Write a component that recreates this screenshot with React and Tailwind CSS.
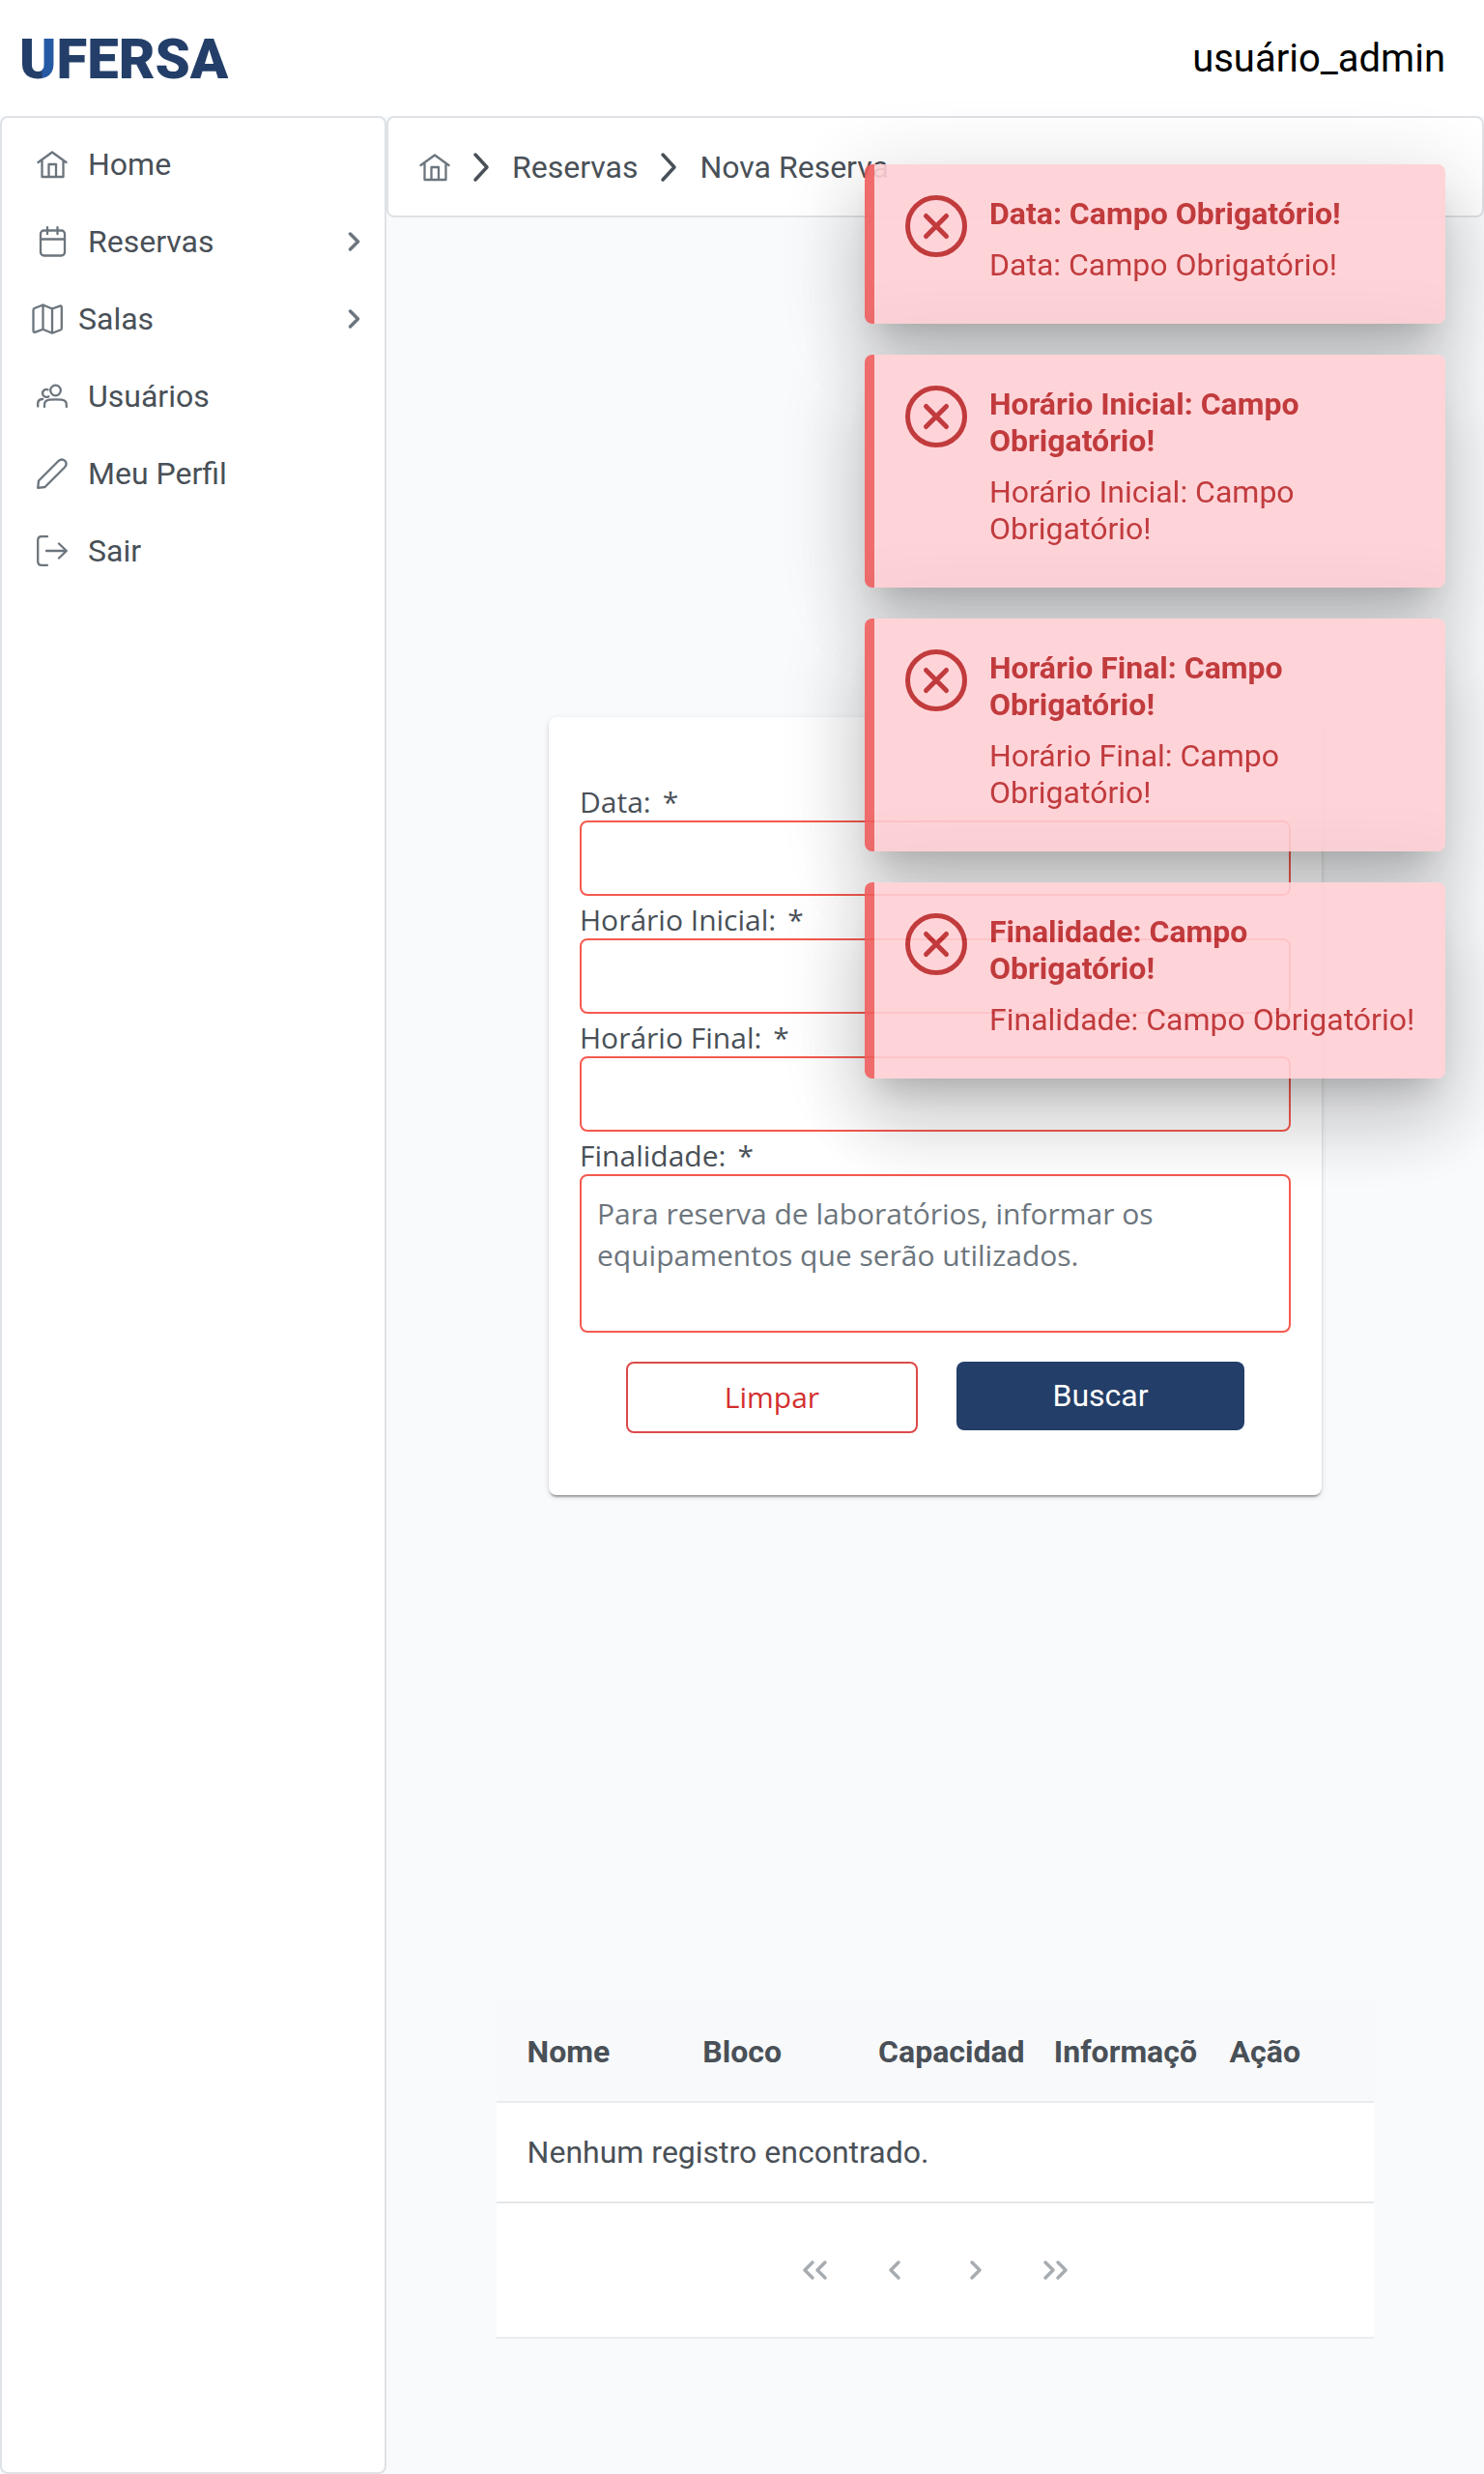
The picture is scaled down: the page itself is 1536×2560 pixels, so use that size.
const HomeIcon = () => (
  <svg viewBox="0 0 32 32" className="size-8" fill="none" stroke="currentColor" strokeWidth="2.3" strokeLinecap="round" strokeLinejoin="round" aria-hidden="true">
    <path d="M1.500 14 16 3.500 30.500 14M5.500 12v17h22V12M12.500 29V16h7.500v13" />
  </svg>
);

const CalendarIcon = () => (
  <svg viewBox="0 0 32 32" className="size-8" fill="none" stroke="currentColor" strokeWidth="2.3" strokeLinecap="round" aria-hidden="true">
    <rect x="4" y="4.500" width="25" height="26" rx="3.500" />
    <path d="M11 1.200v7M21.500 1.200v7M4 13.500h25" />
  </svg>
);

const MapIcon = () => (
  <svg viewBox="0 0 32 32" className="size-8" fill="none" stroke="currentColor" strokeWidth="2.3" strokeLinecap="round" strokeLinejoin="round" aria-hidden="true">
    <path d="M11.500 1.500 2.700 5Q1.500 5.500 1.500 6.800V28Q1.500 30.500 3.700 29.700L11.500 26.700 21 30.700 30 27.200Q30.800 26.800 30.800 25.500V4Q30.800 1.800 29 2.600L21 5.500ZM11.500 1.500V26.700M21 5.500V30.700" />
  </svg>
);

const UsersIcon = () => (
  <svg viewBox="0 0 32 32" className="size-8" fill="none" stroke="currentColor" strokeWidth="2.3" strokeLinecap="round" aria-hidden="true">
    <circle cx="19.500" cy="10" r="5.300" />
    <path d="M8 27v-2q0-4.500 5-5.300 6.500-.8 13 0 4.800.8 4.800 5.300v2M11.500 9.200a4 4 0 1 0 .8 7M1.200 26.500V23q.5-4 5-4" />
  </svg>
);

const PencilIcon = () => (
  <svg viewBox="0 0 32 32" className="size-8" fill="none" stroke="currentColor" strokeWidth="2.3" strokeLinecap="round" strokeLinejoin="round" aria-hidden="true">
    <path d="M1.200 30.800 2 23.500 22.500 3Q26 .2 29.200 2.800 32 6 29 9.500L8.500 30Z" />
  </svg>
);

const SignOutIcon = () => (
  <svg viewBox="0 0 32 32" className="size-8" fill="none" stroke="currentColor" strokeWidth="2.3" strokeLinecap="round" strokeLinejoin="round" aria-hidden="true">
    <path d="M11 1.200H5Q1.200 1.200 1.200 5v22q0 3.800 3.800 3.800h6M10 16h20.500M23 8.500 30.800 16 23 23.500" />
  </svg>
);

const ChevronRight = () => (
  <svg viewBox="0 0 14 22" className="h-[22px] w-3.5" fill="none" stroke="currentColor" strokeWidth="3.500" strokeLinecap="round" strokeLinejoin="round" aria-hidden="true">
    <path d="M2.500 3l8 8-8 8" />
  </svg>
);

const Separator = () => (
  <svg viewBox="0 0 18 32" className="h-8 w-[18px]" fill="none" stroke="currentColor" strokeWidth="3.500" strokeLinecap="round" strokeLinejoin="round" aria-hidden="true">
    <path d="M3 3l12 13L3 29" />
  </svg>
);

const ErrorIcon = () => (
  <svg viewBox="0 0 64 64" className="size-16 shrink-0" fill="none" stroke="currentColor" strokeWidth="5" strokeLinecap="round" aria-hidden="true">
    <circle cx="32" cy="32" r="29.500" />
    <path d="M21.500 21.500l21 21M42.500 21.500l-21 21" />
  </svg>
);

const menu = [
  { label: "Home", Icon: HomeIcon, wide: true },
  { label: "Reservas", Icon: CalendarIcon, wide: true, sub: true },
  { label: "Salas", Icon: MapIcon, sub: true },
  { label: "Usuários", Icon: UsersIcon, wide: true },
  { label: "Meu Perfil", Icon: PencilIcon, wide: true },
  { label: "Sair", Icon: SignOutIcon, wide: true },
];

const fields = [
  { id: "data", label: "Data:" },
  { id: "inicio", label: "Horário Inicial:" },
  { id: "fim", label: "Horário Final:" },
];

const toasts = ["Data", "Horário Inicial", "Horário Final", "Finalidade"];

const pages = [
  { label: "Primeira página", d: "M13 3l-8 8 8 8M26 3l-8 8 8 8" },
  { label: "Página anterior", d: "M19 3l-8 8 8 8" },
  { label: "Próxima página", d: "M12 3l8 8-8 8" },
  { label: "Última página", d: "M5 3l8 8-8 8M18 3l8 8-8 8" },
];

function Label({ htmlFor, children }) {
  return (
    <label htmlFor={htmlFor} className="flex h-11 gap-3 text-[30px] leading-[50px]">
      {children} <span>*</span>
    </label>
  );
}

function Field({ id, label }) {
  return (
    <div>
      <Label htmlFor={id}>{label}</Label>
      <input id={id} type="text" className="block h-[78px] w-full rounded-lg border-2 border-[#f55a4f] bg-white px-4 outline-none" />
    </div>
  );
}

function Toast({ name }) {
  return (
    <div role="alert" className="flex gap-[23px] rounded-lg border-l-[10px] border-[#ef5c5c] bg-[#ffd0d5] pt-8 pr-7 pb-[42px] pl-8 text-[#bb2628] shadow-[0_22px_30px_-14px_rgba(0,0,0,0.2),0_48px_76px_6px_rgba(0,0,0,0.14),0_18px_92px_16px_rgba(0,0,0,0.12)]">
      <ErrorIcon />
      <div className="flex min-w-0 flex-1 flex-col gap-[15px] leading-[38px]">
        <strong className="font-bold">{name}: Campo Obrigatório!</strong>
        <p>{name}: Campo Obrigatório!</p>
      </div>
    </div>
  );
}

export default function App() {
  return (
    <div className="flex min-h-screen flex-col bg-[#f9fafc] font-['Roboto',sans-serif] text-[32px] leading-[38px] text-[#495057]">
      <header className="flex h-[120px] items-center justify-between bg-white pt-0.5 pr-10 pl-5">
        <a href="#" className="bg-[linear-gradient(90deg,#233e68_0_23px,#2559a4_24px_36px,#233e68_37px)] bg-clip-text text-[58px] leading-[72px] font-black text-transparent">UFERSA</a>
        <span className="text-[40px] leading-[48px] text-black">usuário_admin</span>
      </header>

      <div className="flex flex-1">
        <nav className="w-[400px] shrink-0 rounded-lg border-2 border-[#dee2e6] bg-white py-2">
          <ul>
            {menu.map(({ label, Icon, wide, sub }) => (
              <li key={label}>
                <a href="#" className="flex h-20 items-center gap-4 pr-6 pl-[31px]">
                  <span className={wide ? "flex w-[42px] justify-center text-[#6c757d]" : "flex text-[#6c757d]"}><Icon /></span>
                  <span>{label}</span>
                  {sub && <span className="ml-auto text-[#6c757d]"><ChevronRight /></span>}
                </a>
              </li>
            ))}
          </ul>
        </nav>

        <main className="flex min-w-0 flex-1 flex-col">
          <nav aria-label="Trilha" className="h-[105px] rounded-lg border-2 border-[#dee2e6] bg-white px-8">
            <ol className="flex h-full items-center gap-[23px]">
              <li><a href="#" aria-label="Home" className="block text-[#6c757d]"><HomeIcon /></a></li>
              <li><Separator /></li>
              <li><a href="#">Reservas</a></li>
              <li><Separator /></li>
              <li><a href="#">Nova Reserva</a></li>
            </ol>
          </nav>

          <div className="flex flex-1 items-center justify-center">
            <form className="w-[800px] rounded-lg bg-white px-8 pt-[63px] pb-16 font-['Open_Sans','Noto_Sans',sans-serif] shadow-[0_4px_2px_-2px_rgba(0,0,0,0.2),0_2px_2px_0_rgba(0,0,0,0.14),0_2px_6px_0_rgba(0,0,0,0.12)]">
              {fields.map((f) => <Field key={f.id} {...f} />)}
              <Label htmlFor="finalidade">Finalidade:</Label>
              <textarea
                id="finalidade"
                placeholder="Para reserva de laboratórios, informar os equipamentos que serão utilizados."
                className="block h-[164px] w-full resize-none rounded-lg border-2 border-[#f55a4f] bg-white px-4 py-[17px] text-[30px] leading-[43px] outline-none placeholder:text-[#6c757d]"
              />
              <div className="mt-[30px] flex items-start gap-10 px-12">
                <button type="button" className="h-[74px] flex-1 rounded-lg border-2 border-[#dc4a4a] text-[30px] text-[#d32f2f]">Limpar</button>
                <button type="button" className="h-[71px] flex-1 rounded-lg bg-[#233e68] font-['Roboto',sans-serif] text-white">Buscar</button>
              </div>
            </form>
          </div>

          <section className="mx-auto mt-2 mb-[140px] w-4/5">
            <table className="w-full table-fixed text-left">
              <thead>
                <tr className="h-[104px] border-b-2 border-[#e9ecef] bg-[#f8f9fa]">
                  {["Nome", "Bloco", "Capacidad", "Informaçõ", "Ação"].map((h) => (
                    <th key={h} className="pl-8 font-bold whitespace-nowrap">{h}</th>
                  ))}
                </tr>
              </thead>
              <tbody>
                <tr className="h-[104px] border-b-2 border-[#e4e7ea] bg-white">
                  <td colSpan={5} className="px-8">Nenhum registro encontrado.</td>
                </tr>
              </tbody>
            </table>
            <div className="flex h-[140px] items-center justify-center gap-[5px] border-b-2 border-[#e9ecef] bg-white">
              {pages.map((p) => (
                <button key={p.label} type="button" disabled aria-label={p.label} className="flex size-[78px] items-center justify-center text-[#a7acb1]">
                  <svg viewBox="0 0 31 22" className="h-[22px] w-[31px]" fill="none" stroke="currentColor" strokeWidth="3.500" strokeLinecap="round" strokeLinejoin="round" aria-hidden="true">
                    <path d={p.d} />
                  </svg>
                </button>
              ))}
            </div>
          </section>
        </main>
      </div>

      <div className="fixed top-[170px] right-10 flex w-[601px] flex-col gap-8 opacity-90">
        {toasts.map((t) => <Toast key={t} name={t} />)}
      </div>
    </div>
  );
}
